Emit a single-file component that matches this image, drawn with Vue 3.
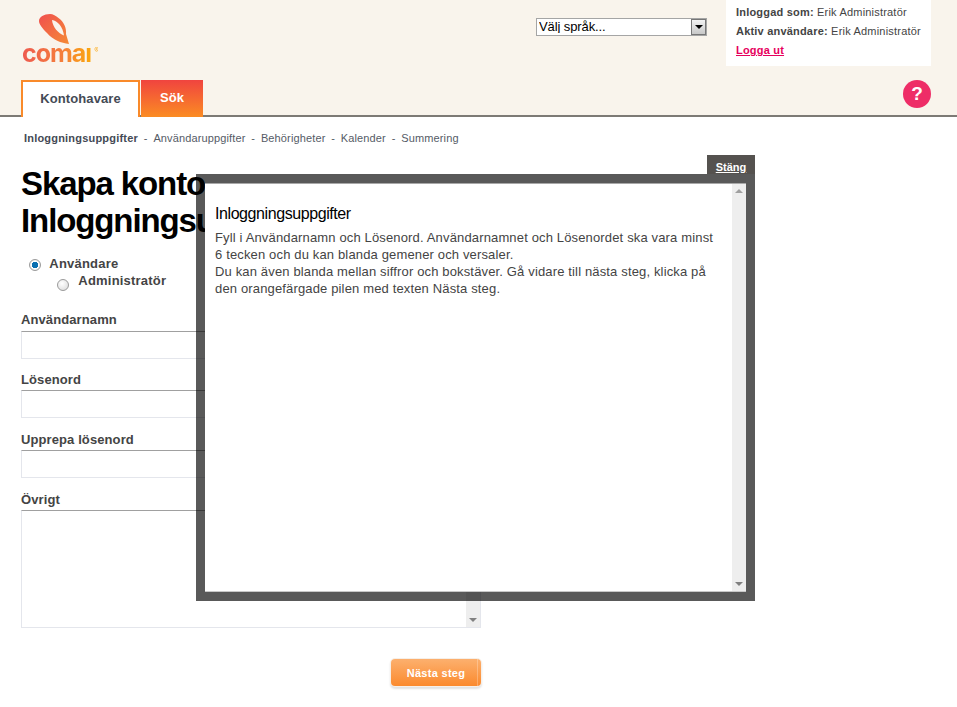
<template>
  <div class="page">
    <header class="top">
      <div class="top-row">
        <div class="logo">
          <svg class="logo-mark" width="31" height="31" viewBox="0 0 31 31">
            <defs>
              <linearGradient id="markGrad" x1="0" y1="0" x2="1" y2="1">
                <stop offset="0" stop-color="#f0504f" />
                <stop offset="1" stop-color="#f58a35" />
              </linearGradient>
            </defs>
            <path fill-rule="evenodd" d="M11 0 C14 0 17 2 19.5 4 C25 8 27.5 14 27 20 L30 30 C22 29 14 26 8 19 C3 14 0 10 0 7 C0 3 5 0 11 0 Z M13 6 C18.5 6.5 24 13 25 21.5 C19.5 19.5 13.5 13 13 6 Z" fill="url(#markGrad)" />
          </svg>
          <div class="logo-text">comaı<sup>®</sup></div>
        </div>
        <div class="lang">
          <select>
            <option>Välj språk...</option>
          </select>
          <span class="lang-btn"></span>
        </div>
        <div class="user-box">
          <p><b>Inloggad som:</b> Erik Administratör</p>
          <p><b>Aktiv användare:</b> Erik Administratör</p>
          <p><a href="#" class="logout">Logga ut</a></p>
        </div>
      </div>
      <nav class="tabs">
        <div class="tab active">Kontohavare</div>
        <div class="tab search">Sök</div>
        <div class="help">?</div>
      </nav>
    </header>

    <main class="content">
      <div class="steps">
        <template v-for="(step, i) in steps" :key="step">
          <span v-if="i > 0" class="sep">-</span>
          <span :class="{ current: i === 0 }">{{ step }}</span>
        </template>
      </div>

      <h1>Skapa konto<br />Inloggningsuppgifter</h1>

      <div class="roles">
        <label class="role"><input type="radio" name="role" checked /> Användare</label>
        <label class="role second"><input type="radio" name="role" /> Administratör</label>
      </div>

      <div class="form">
        <div v-for="field in fields" :key="field" class="field">
          <label>{{ field }}</label>
          <input type="text" />
        </div>
        <div class="field last">
          <label>Övrigt</label>
          <div class="textarea">
            <div class="scroll">
              <span class="arrow up"></span>
              <span class="arrow down"></span>
            </div>
          </div>
        </div>
        <div class="actions">
          <button class="next">Nästa steg</button>
        </div>
      </div>
    </main>

    <div class="modal">
      <a href="#" class="close">Stäng</a>
      <div class="modal-frame">
        <div class="modal-body">
          <h2>Inloggningsuppgifter</h2>
          <p>
            Fyll i Användarnamn och Lösenord. Användarnamnet och Lösenordet ska vara minst 6 tecken och du kan blanda gemener och versaler.<br />
            Du kan även blanda mellan siffror och bokstäver. Gå vidare till nästa steg, klicka på den orangefärgade pilen med texten Nästa steg.
          </p>
        </div>
        <div class="scroll modal-scroll">
          <span class="arrow up"></span>
          <span class="arrow down"></span>
        </div>
      </div>
    </div>
  </div>
</template>

<script setup>
const steps = ['Inloggningsuppgifter', 'Användaruppgifter', 'Behörigheter', 'Kalender', 'Summering']
const fields = ['Användarnamn', 'Lösenord', 'Upprepa lösenord']
</script>

<style>
html, body {
  margin: 0;
  background: #fff;
}
</style>

<style scoped>
.page {
  position: relative;
  width: 957px;
  height: 707px;
  overflow: hidden;
  font-family: "Liberation Sans", Arial, sans-serif;
  color: #444;
}

.top {
  height: 115px;
  background: #f9f4ec;
  border-bottom: 2px solid #7d7a75;
  display: flex;
  flex-direction: column;
  justify-content: space-between;
}

.top-row {
  display: flex;
  align-items: flex-start;
  padding-left: 22px;
}

.logo {
  width: 514px;
  padding-top: 14px;
}

.logo-mark {
  display: block;
  margin-left: 17px;
}

.logo-text {
  margin-top: -1px;
  font-family: Inter, "Liberation Sans", sans-serif;
  font-size: 25px;
  line-height: 18px;
  font-weight: 700;
  letter-spacing: -1px;
  width: 76px;
  white-space: nowrap;
  background: linear-gradient(90deg, #ee5a50, #f5803a 55%, #fba60e 90%);
  -webkit-background-clip: text;
  background-clip: text;
  color: transparent;
}

.logo-text sup {
  margin-left: 3px;
  font-size: 7px;
  font-weight: 400;
  letter-spacing: 0;
  line-height: 0;
  vertical-align: 9px;
}

.lang {
  position: relative;
  width: 171px;
  height: 18px;
  margin-top: 18px;
}

.lang select {
  display: block;
  box-sizing: border-box;
  width: 100%;
  height: 100%;
  padding: 0 0 2px 2px;
  appearance: none;
  font-family: "Liberation Sans", Arial, sans-serif;
  font-size: 13px;
  letter-spacing: -0.1px;
  color: #000;
  background: #fff;
  border: 1px solid #a5a5a5;
  border-radius: 0;
}

.lang-btn {
  position: absolute;
  right: 1px;
  top: 1px;
  box-sizing: border-box;
  width: 15px;
  height: 16px;
  background: linear-gradient(#f2f2f2, #c8c8c8);
  border: 1px solid #777;
  pointer-events: none;
}

.lang-btn::after {
  content: "";
  position: absolute;
  left: 3px;
  top: 5px;
  border-left: 4px solid transparent;
  border-right: 4px solid transparent;
  border-top: 4px solid #000;
}

.user-box {
  width: 195px;
  height: 66px;
  margin-left: 19px;
  padding-left: 10px;
  background: #fff;
  font-size: 11px;
  letter-spacing: 0.2px;
  color: #444;
}

.user-box p {
  margin: 0;
  height: 19px;
  line-height: 19px;
}

.user-box p:first-child {
  margin-top: 3px;
}

.logout {
  color: #e6005c;
  font-weight: 700;
}

.tabs {
  display: flex;
  align-items: flex-start;
  padding-left: 21px;
  height: 37px;
  margin-bottom: -2px;
}

.tab {
  box-sizing: border-box;
  height: 37px;
  font-size: 13px;
  font-weight: 700;
  letter-spacing: 0.1px;
  text-align: center;
  line-height: 33px;
}

.tab.active {
  width: 119px;
  background: #fff;
  border: 2px solid #f98a2a;
  border-bottom: 0;
  color: #444a55;
}

.tab.search {
  width: 62px;
  margin-left: 1px;
  line-height: 36px;
  letter-spacing: 0;
  background: linear-gradient(#f0443f, #fb8c23);
  color: #fff;
}

.help {
  width: 28px;
  height: 28px;
  margin-left: auto;
  margin-right: 26px;
  border-radius: 50%;
  background: #ee2d67;
  color: #fff;
  font-size: 19px;
  font-weight: 700;
  line-height: 28px;
  text-align: center;
}

.content {
  padding: 14px 0 0 21px;
}

.steps {
  display: flex;
  gap: 5.8px;
  padding-left: 3px;
  font-size: 11px;
  line-height: 14px;
  letter-spacing: 0.13px;
  color: #555b66;
}

.steps .current {
  font-weight: 700;
  letter-spacing: 0.2px;
  color: #444a55;
}

h1 {
  margin: 20px 0 0;
  font-size: 33px;
  line-height: 37px;
  font-weight: 700;
  letter-spacing: -1.1px;
  color: #000;
}

.roles {
  margin-top: 16px;
  font-size: 13px;
  font-weight: 700;
  letter-spacing: 0.2px;
}

.role {
  display: block;
  height: 17px;
  line-height: 17px;
  padding-left: 8px;
}

.role input {
  appearance: none;
  box-sizing: border-box;
  width: 12px;
  height: 12px;
  margin: 0 5px 0 0;
  border: 1px solid #9a9a9a;
  border-radius: 50%;
  background: radial-gradient(circle at 40% 35%, #fff, #d8d8d8);
  vertical-align: -3px;
}

.role input:checked {
  background: radial-gradient(circle at 50% 50%, #0a6fb0 0 3px, #fff 3.5px, #dcdcdc);
}

.role.second {
  padding-left: 36px;
}

.role.second input {
  margin-right: 6px;
  vertical-align: -6px;
}

.form {
  width: 460px;
  margin-top: 22px;
}

.field {
  height: 60px;
}

.field label {
  display: block;
  font-size: 13px;
  font-weight: 700;
  letter-spacing: 0.1px;
  line-height: 18px;
  color: #444;
}

.field input {
  display: block;
  box-sizing: border-box;
  width: 100%;
  height: 28px;
  margin-top: 1px;
  border: 1px solid #e4e6ec;
  border-top-color: #a0a0a0;
}

.field:first-child input {
  margin-top: 2px;
}

.field.last {
  height: auto;
}

.textarea {
  box-sizing: border-box;
  position: relative;
  height: 118px;
  margin-top: 1px;
  border: 1px solid #e4e6ec;
  border-top-color: #a0a0a0;
}

.scroll {
  position: absolute;
  top: 0;
  right: 0;
  bottom: 0;
  width: 14px;
  background: #eeeeee;
  display: flex;
  flex-direction: column;
  justify-content: space-between;
  align-items: center;
  padding: 5px 0;
  box-sizing: border-box;
}

.arrow {
  width: 0;
  height: 0;
  border-left: 4px solid transparent;
  border-right: 4px solid transparent;
}

.arrow.up {
  border-bottom: 4px solid #a0a0a0;
}

.arrow.down {
  border-top: 4px solid #808080;
}

.actions {
  display: flex;
  justify-content: flex-end;
  margin-top: 31px;
}

.next {
  position: relative;
  width: 90px;
  height: 27px;
  padding: 0;
  border: 0;
  border-radius: 4px;
  background: linear-gradient(#fcb06e, #fb8a2e);
  box-shadow: 0 0 0 1px #f6efe8, 0 2px 2px 1px #e2e2e2;
  color: #fff;
  font-family: inherit;
  font-size: 11px;
  font-weight: 700;
  letter-spacing: 0.3px;
}

.next::after {
  content: "";
  position: absolute;
  right: 3px;
  top: 0;
  bottom: 0;
  width: 1px;
  background: rgba(255, 255, 255, 0.25);
}

.modal {
  position: absolute;
  left: 196px;
  top: 155px;
  width: 559px;
  height: 446px;
}

.close {
  position: absolute;
  right: 0;
  top: 0;
  width: 48px;
  height: 19px;
  background: #55524f;
  color: #fff;
  font-size: 11px;
  font-weight: 700;
  line-height: 25px;
  text-align: center;
}

.modal-frame {
  position: absolute;
  left: 0;
  right: 0;
  top: 19px;
  bottom: 0;
  box-sizing: border-box;
  border: 9px solid rgba(0, 0, 0, 0.65);
  background: #fff;
  background-clip: padding-box;
  box-shadow: inset 0 1px 0 #a8a8a8, inset 0 -1px 0 #c8c8c8;
}

.modal-body {
  padding: 21px 26px 0 10px;
  font-size: 13px;
  letter-spacing: 0.15px;
  line-height: 17px;
  color: #444;
}

.modal-body h2 {
  margin: 0 0 5px;
  font-size: 16px;
  font-weight: 400;
  letter-spacing: -0.42px;
  line-height: 20px;
  color: #000;
}

.modal-body p {
  margin: 0;
}

.modal-scroll {
  top: 1px;
  bottom: 1px;
}
</style>
